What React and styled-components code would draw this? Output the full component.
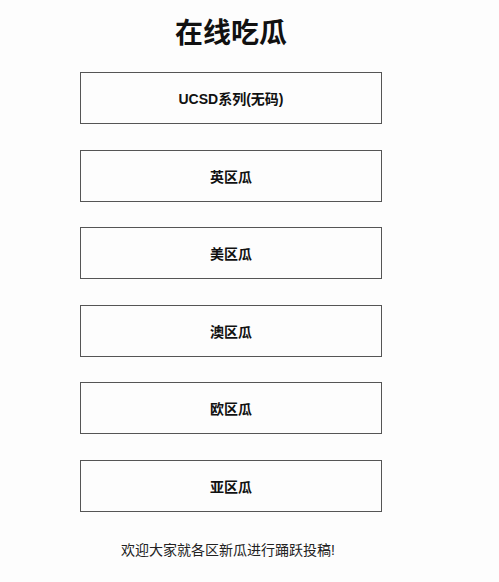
import React from "react";
import styled, { createGlobalStyle } from "styled-components";

const Global = createGlobalStyle`
  body {
    margin: 0;
    background: #fdfdfd;
    font-family: "Liberation Sans", "Noto Sans CJK SC", sans-serif;
    color: #111;
  }
`;

const Page = styled.div`
  width: 462px;
  display: flex;
  flex-direction: column;
  align-items: center;
  padding-top: 16px;
`;

const Title = styled.h1`
  margin: 0 0 20px;
  font-size: 28px;
  line-height: 36px;
  font-weight: 700;
  color: #111;
`;

const List = styled.div`
  display: flex;
  flex-direction: column;
  gap: 25.6px;
`;

const Item = styled.div`
  width: 300px;
  height: 50px;
  border: 1px solid #555;
  display: flex;
  align-items: center;
  justify-content: center;
  font-size: 14px;
  font-weight: 700;
  color: #111;
  background: #fdfdfd;
`;

const Footer = styled.p`
  margin: 27px 0 0 -6px;
  font-size: 14px;
  line-height: 22px;
  color: #222;
`;

const items = ["UCSD系列(无码)", "英区瓜", "美区瓜", "澳区瓜", "欧区瓜", "亚区瓜"];

export default function App() {
  return (
    <>
      <Global />
      <Page>
        <Title>在线吃瓜</Title>
        <List>
          {items.map((t) => (
            <Item key={t}>{t}</Item>
          ))}
        </List>
        <Footer>欢迎大家就各区新瓜进行踊跃投稿!</Footer>
      </Page>
    </>
  );
}
